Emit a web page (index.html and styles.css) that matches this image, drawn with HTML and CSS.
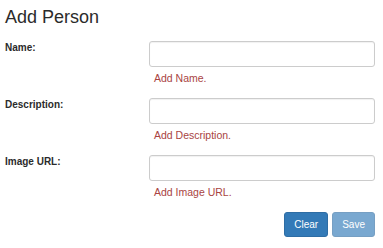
FILE: index.html
```html
<!DOCTYPE html>
<html>
<head>
<meta charset="utf-8">
<link rel="stylesheet" href="styles.css">
</head>
<body>
<div class="page">
  <h1 class="title">Add Person</h1>
  <form class="form">
    <div class="row">
      <label class="label">Name:</label>
      <div class="field">
        <input class="input" type="text">
        <div class="help">Add Name.</div>
      </div>
    </div>
    <div class="row">
      <label class="label">Description:</label>
      <div class="field">
        <input class="input" type="text">
        <div class="help">Add Description.</div>
      </div>
    </div>
    <div class="row">
      <label class="label">Image URL:</label>
      <div class="field">
        <input class="input" type="text">
        <div class="help">Add Image URL.</div>
      </div>
    </div>
    <div class="actions">
      <button type="button" class="btn">Clear</button>
      <button type="button" class="btn btn-disabled">Save</button>
    </div>
  </form>
</div>
</body>
</html>
```

FILE: styles.css
```css
html, body {
  margin: 0;
  padding: 0;
  background: #fff;
}
body {
  font-family: "Liberation Sans", Arial, sans-serif;
  color: #333;
}
.page {
  padding: 0 8px 0 5px;
}
.title {
  margin: 8px 0 0;
  font-size: 18px;
  line-height: 19px;
  font-weight: normal;
  color: #2b2b2b;
}
.form {
  margin-top: 14px;
}
.row {
  display: grid;
  grid-template-columns: 144px 1fr;
  margin-bottom: 13px;
}
.label {
  font-size: 10px;
  line-height: 14px;
  font-weight: bold;
  color: #2b2b2b;
}
.field {
  display: flex;
  flex-direction: column;
}
.input {
  box-sizing: border-box;
  height: 26px;
  width: 100%;
  margin: 0;
  border: 1px solid #ccc;
  border-radius: 3px;
  background: #fff;
  box-shadow: inset 0 1px 1px rgba(0,0,0,0.06);
  font: inherit;
  font-size: 10px;
}
.help {
  margin-top: 4px;
  padding-left: 5px;
  font-size: 10.5px;
  line-height: 14px;
  color: #a94442;
}
.actions {
  display: flex;
  justify-content: flex-end;
  gap: 4px;
  margin-top: 6px;
}
.btn {
  box-sizing: border-box;
  margin: 0;
  padding: 4px 9px;
  font-family: "Liberation Sans", Arial, sans-serif;
  font-size: 10px;
  line-height: 15px;
  color: #fff;
  background: #337ab7;
  border: 1px solid #2e6da4;
  border-radius: 3px;
}
.btn-disabled {
  opacity: 0.65;
}
```
